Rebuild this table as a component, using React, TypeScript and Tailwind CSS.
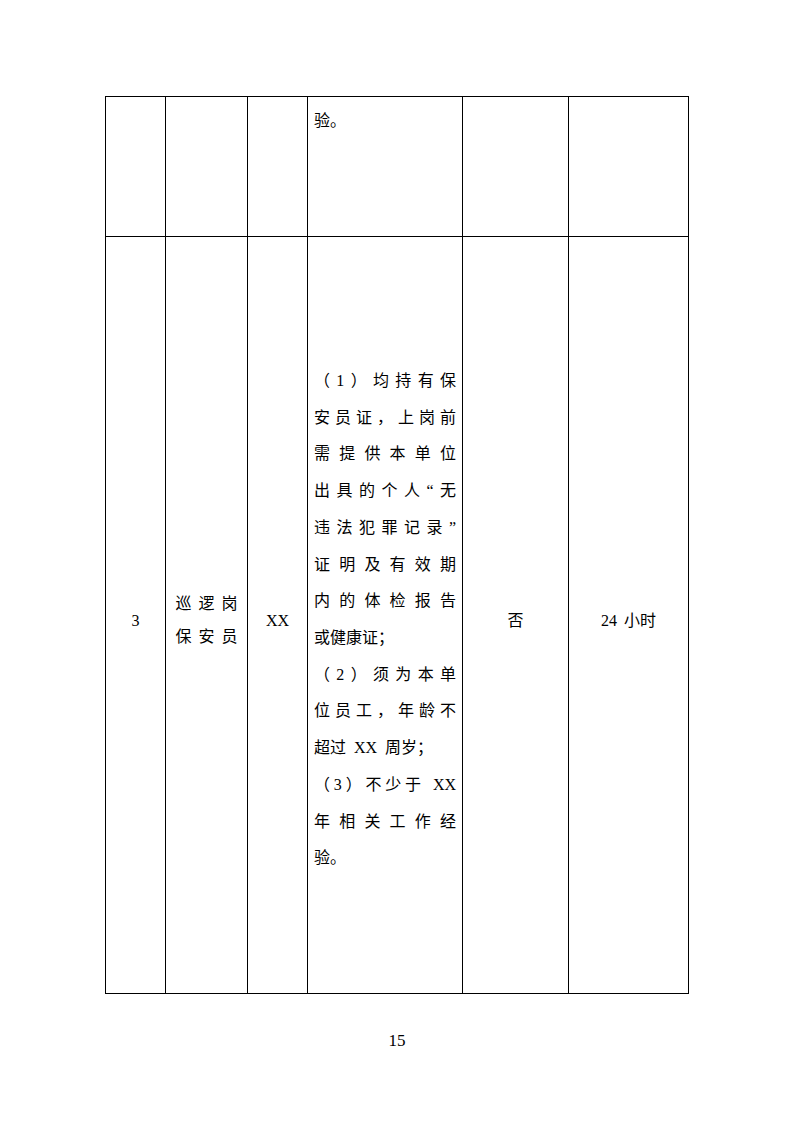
import React from "react";

const lines: { t: string; j: boolean }[] = [
  { t: "（1）均持有保", j: true },
  { t: "安员证，上岗前", j: true },
  { t: "需提供本单位", j: true },
  { t: "出具的个人“无", j: true },
  { t: "违法犯罪记录”", j: true },
  { t: "证明及有效期", j: true },
  { t: "内的体检报告", j: true },
  { t: "或健康证；", j: false },
  { t: "（2）须为本单", j: true },
  { t: "位员工，年龄不", j: true },
  { t: "超过\u2002XX\u2002周岁；", j: false },
  { t: "（3）不少于\u2002XX", j: true },
  { t: "年相关工作经", j: true },
  { t: "验。", j: false },
];

export default function App() {
  const cell = "border-l border-t border-black";
  const mid = `${cell} flex items-center justify-center pt-[12px]`;
  return (
    <div className="w-[793px] h-[1122px] bg-white text-black text-[16px] overflow-hidden font-['Liberation_Serif','Noto_Sans_CJK_SC',serif]">
      <div className="pt-[96px] pl-[105px]">
        <div className="grid grid-cols-[60px_82px_60px_155px_106px_120px] grid-rows-[140px_757px] w-[584px] border-r border-b border-black">
          <div className={cell}></div>
          <div className={cell}></div>
          <div className={cell}></div>
          <div className={`${cell} pt-[6px] pl-[6px] pr-[6px] leading-[36.7px]`}>验。</div>
          <div className={cell}></div>
          <div className={cell}></div>

          <div className={mid}>3</div>
          <div className={`${cell} flex flex-col items-center justify-center pt-[10px] leading-[33px]`}>
            <div className="tracking-[7px] pl-[7px]">巡逻岗</div>
            <div className="tracking-[7px] pl-[7px]">保安员</div>
          </div>
          <div className={mid}>XX</div>
          <div className={`${cell} flex flex-col justify-center pt-[10px] pl-[6px] pr-[6px] leading-[36.7px]`}>
            {lines.map((l, i) => (
              <div
                key={i}
                className={
                  l.j
                    ? "whitespace-nowrap text-justify [text-align-last:justify] [text-justify:inter-character]"
                    : "whitespace-pre"
                }
              >
                {l.t}
              </div>
            ))}
          </div>
          <div className={mid}>否</div>
          <div className={`${mid} whitespace-pre`}>
            <span>24</span>
            <span className="w-[7px]"></span>
            <span>小时</span>
          </div>
        </div>
        <div className="w-[584px] text-center mt-[37px] leading-[20px] text-[17px]">15</div>
      </div>
    </div>
  );
}
